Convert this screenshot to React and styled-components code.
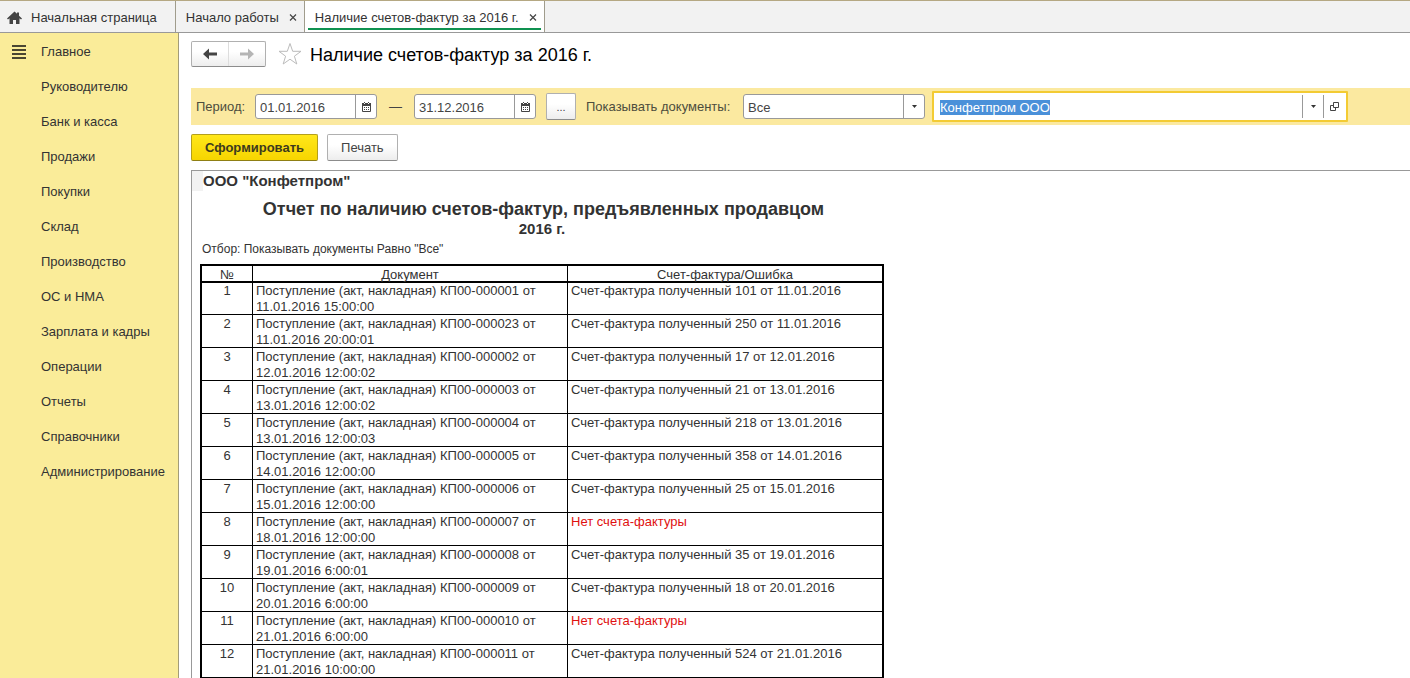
import React, { useEffect, useRef } from 'react';
import styled, { createGlobalStyle, css } from 'styled-components';

const GlobalStyle = createGlobalStyle`
  * {
    box-sizing: border-box;
  }

  body {
    margin: 0;
    background-color: #fff;
  }

  body, button, input, select {
    font-family: 'Liberation Sans', Arial, sans-serif;
    font-size: 13px;
    color: #444;
  }
`;

const Page = styled.div`
  height: 100vh;
  display: flex;
  flex-direction: column;
  overflow: hidden;
`;

const TabBar = styled.nav`
  height: 33px;
  flex-shrink: 0;
  display: flex;
  background-color: #f2f2f2;
  border-top: 1px solid #b5a883;
  border-bottom: 1px solid #999;
`;

const Tab = styled.div`
  position: relative;
  display: flex;
  align-items: center;
  gap: 8px;
  padding: 2px 5px 0 10px;
  border-right: 1px solid #a09c8c;
  background-color: ${({ $active }) => ($active ? '#fff' : 'transparent')};

  ${({ $active }) =>
    $active &&
    css`
      &::after {
        content: '';
        position: absolute;
        left: 3px;
        right: 3px;
        bottom: 2px;
        height: 2px;
        background-color: #0f9150;
      }
    `}
`;

const TabLink = styled.a`
  display: flex;
  align-items: center;
  gap: 8px;
  color: #333;
  text-decoration: none;
  white-space: nowrap;
`;

const HomeTab = styled(Tab)`
  padding: 2px 18px 0 6px;
`;

const IconButton = styled.button`
  display: flex;
  align-items: center;
  justify-content: center;
  padding: 0;
  border: 0;
  background: none;
`;

const Body = styled.div`
  flex: 1;
  min-height: 0;
  display: flex;
`;

const Sidebar = styled.aside`
  width: 179px;
  flex-shrink: 0;
  display: flex;
  align-items: flex-start;
  padding: 1px 0 0 12px;
  background-color: #faec99;
  border-right: 1px solid #a39c78;
`;

const MenuButton = styled(IconButton)`
  width: 14px;
  height: 35px;
`;

const Menu = styled.ul`
  margin: 0;
  padding: 0 0 0 15px;
  list-style: none;
`;

const MenuLink = styled.a`
  display: block;
  line-height: 35px;
  color: #333;
  text-decoration: none;
  white-space: nowrap;
`;

const Main = styled.main`
  flex: 1;
  min-width: 0;
  display: flex;
  flex-direction: column;
  padding: 8px 0 0 12px;
`;

const TitleRow = styled.header`
  display: flex;
  align-items: center;
  height: 26px;
`;

const raised = css`
  border: 1px solid #b0b0b0;
  border-bottom-color: #8c8c8c;
  border-radius: 2px;
  background: linear-gradient(#fff 40%, #ededed);
`;

const History = styled.div`
  ${raised}
  display: flex;
  width: 75px;
  height: 26px;
  margin-right: 12px;

  ${IconButton} {
    flex: 1;
  }

  ${IconButton} + ${IconButton} {
    border-left: 1px solid #ddd;
  }
`;

const Title = styled.h1`
  margin: 0 0 0 8px;
  padding-top: 2px;
  font-size: 18px;
  line-height: 24px;
  font-weight: 400;
  color: #000;
`;

const FilterBar = styled.form`
  height: 37px;
  flex-shrink: 0;
  display: flex;
  align-items: center;
  margin-top: 21px;
  padding-left: 5px;
  background-color: #fbe9a0;
`;

const Label = styled.label`
  width: ${({ $width }) => $width}px;
  flex-shrink: 0;
  white-space: nowrap;
  color: #4d4d3d;
`;

const Field = styled.div`
  width: ${({ $width }) => $width}px;
  height: 25px;
  display: flex;
  border: 1px solid #999;
  border-radius: 3px;
  background-color: #fff;
`;

const TextInput = styled.input`
  flex: 1;
  min-width: 0;
  padding: 2px 4px 0;
  border: 0;
  outline: 0;
  background: none;

  &::selection {
    color: #fff;
    background-color: #4a90d9;
  }
`;

const FieldButton = styled(IconButton)`
  width: 21px;
  border-left: 1px solid #999;
`;

const Dash = styled.span`
  width: 37px;
  text-align: center;
`;

const MoreButton = styled.button`
  ${raised}
  width: 30px;
  height: 27px;
  margin: 0 10px;
  padding: 0;
  font-size: 11px;
`;

const SelectField = styled.div`
  width: 182px;
  height: 25px;
  display: grid;
  grid-template-columns: 1fr 21px;
  border: 1px solid #999;
  border-radius: 3px;
  background-color: #fff;

  select {
    grid-area: 1 / 1 / 2 / 3;
    appearance: none;
    padding: 2px 4px 0;
    border: 0;
    outline: 0;
    background: none;
  }
`;

const SelectArrow = styled.span`
  grid-area: 1 / 2 / 2 / 3;
  display: flex;
  align-items: center;
  justify-content: center;
  border-left: 1px solid #999;
  pointer-events: none;
`;

const FocusField = styled(Field)`
  height: 31px;
  margin-left: 7px;
  padding: 2px 2px 2px 0;
  border: 2px solid #f3cb33;
  border-radius: 1px;

  ${TextInput} {
    padding: 2px 6px 0;
  }
`;

const Actions = styled.div`
  display: flex;
  gap: 9px;
  margin: 9px 0;
`;

const ActionButton = styled.button`
  ${raised}
  height: 27px;
  padding: 0 13px;

  ${({ $primary }) =>
    $primary &&
    css`
      border-color: #b39f1c;
      border-bottom-color: #8f7f14;
      background: linear-gradient(#ffe71a, #f7d500);
      font-weight: 700;
      color: #3d3a1e;
    `}
`;

const Report = styled.section`
  flex: 1;
  min-height: 0;
  overflow: hidden;
  border-top: 1px solid #999;
  border-left: 1px solid #999;
  color: #333;
`;

const Company = styled.div`
  display: flex;
  height: 20px;
  line-height: 20px;
  font-size: 15px;
  font-weight: 700;

  &::before {
    content: '';
    width: 11px;
    background-color: #f2f2f2;
  }
`;

const Sheet = styled.div`
  width: 684px;
  margin-left: 8px;
`;

const ReportTitle = styled.h2`
  margin: 0;
  padding: 6px 0 0 3px;
  font-size: 18px;
  line-height: 24px;
  text-align: center;
`;

const ReportYear = styled.p`
  margin: 0;
  font-size: 15px;
  line-height: 16px;
  font-weight: 700;
  text-align: center;
`;

const ReportFilter = styled.p`
  margin: 0;
  padding: 4px 2px 7px;
  font-size: 12px;
  line-height: 16px;
`;

const Table = styled.table`
  width: 100%;
  table-layout: fixed;
  border: 2px solid #000;
  border-spacing: 0;

  th {
    height: 15px;
    padding: 2px 0 0;
    line-height: 13px;
    font-weight: 400;
  }

  td {
    height: 33px;
    padding: 0 3px;
    line-height: 16px;
    vertical-align: top;
    border-top: 1px solid #000;
  }

  th + th,
  td + td {
    border-left: 1px solid #000;
  }

  tbody tr:first-child td {
    box-shadow: inset 0 1px #000;
  }

  td:first-child {
    text-align: center;
  }
`;

const CellText = styled.div`
  height: 32px;
  padding-top: 1px;
`;

const NumberCol = styled.col`
  width: 50px;
`;

const InvoiceCell = styled.td`
  color: ${({ $missing }) => ($missing ? '#e01010' : 'inherit')};
`;

const menu = [
  'Главное',
  'Руководителю',
  'Банк и касса',
  'Продажи',
  'Покупки',
  'Склад',
  'Производство',
  'ОС и НМА',
  'Зарплата и кадры',
  'Операции',
  'Отчеты',
  'Справочники',
  'Администрирование',
];

const rows = [
  { doc: '000001', date: '11.01.2016 15:00:00', invoice: '101 от 11.01.2016' },
  { doc: '000023', date: '11.01.2016 20:00:01', invoice: '250 от 11.01.2016' },
  { doc: '000002', date: '12.01.2016 12:00:02', invoice: '17 от 12.01.2016' },
  { doc: '000003', date: '13.01.2016 12:00:02', invoice: '21 от 13.01.2016' },
  { doc: '000004', date: '13.01.2016 12:00:03', invoice: '218 от 13.01.2016' },
  { doc: '000005', date: '14.01.2016 12:00:00', invoice: '358 от 14.01.2016' },
  { doc: '000006', date: '15.01.2016 12:00:00', invoice: '25 от 15.01.2016' },
  { doc: '000007', date: '18.01.2016 12:00:00' },
  { doc: '000008', date: '19.01.2016 6:00:01', invoice: '35 от 19.01.2016' },
  { doc: '000009', date: '20.01.2016 6:00:00', invoice: '18 от 20.01.2016' },
  { doc: '000010', date: '21.01.2016 6:00:00' },
  { doc: '000011', date: '21.01.2016 10:00:00', invoice: '524 от 21.01.2016' },
];

const HomeIcon = () => (
  <svg width='17' height='14' viewBox='0 0 17 14' fill='#444'>
    <path d='M8.5 0.5 L1 7.5 L2 8.5 L3.5 7.3 V13 H7 V9 H10 V13 H13.5 V7.3 L15 8.5 L16 7.5 L13 4.7 V1.5 H11 V2.8 Z' />
  </svg>
);

const CloseIcon = () => (
  <svg width='12' height='12' viewBox='0 0 12 12' stroke='#444' strokeWidth='1.2'>
    <path d='M3 2.5 L9 8.5 M9 2.5 L3 8.5' />
  </svg>
);

const MenuIcon = () => (
  <svg width='14' height='14' viewBox='0 0 14 14' fill='#4a4632'>
    <path d='M0 0h14v2H0z M0 4h14v2H0z M0 8h14v2H0z M0 12h14v2H0z' />
  </svg>
);

const ArrowIcon = ({ color, flip }) => (
  <svg width='14' height='12' viewBox='0 0 14 12' fill={color}>
    <path
      d={
        flip
          ? 'M14 6 L8 0.5 V4.6 H0 V7.4 H8 V11.5 Z'
          : 'M0 6 L6 0.5 V4.6 H14 V7.4 H6 V11.5 Z'
      }
    />
  </svg>
);

const StarIcon = () => (
  <svg width='24' height='24' viewBox='0 0 24 24' fill='none' stroke='#bbb'>
    <path d='M12 1.5 L14.7 9.3 H23 L16.4 14.2 L18.8 22 L12 17.2 L5.2 22 L7.6 14.2 L1 9.3 H9.3 Z' />
  </svg>
);

const CalendarIcon = () => (
  <svg width='9' height='10' viewBox='0 0 9 10'>
    <path d='M0 1h9v3H0z M2 0h1v1H2z M6 0h1v1H6z' fill='#444' />
    <path d='M2 1h1v1H2z M6 1h1v1H6z' fill='#fff' />
    <path d='M0.5 4 V9.5 H8.5 V4' fill='none' stroke='#444' />
    <path d='M2 5h1v1H2z M4 5h1v1H4z M6 5h1v1H6z M2 7h1v1H2z M4 7h1v1H4z M6 7h1v1H6z' fill='#444' />
  </svg>
);

const CaretIcon = () => (
  <svg width='5' height='3' viewBox='0 0 5 3' fill='#333'>
    <path d='M0 0 H5 L2.5 3 Z' />
  </svg>
);

const OpenIcon = () => (
  <svg width='9' height='9' viewBox='0 0 9 9' fill='none' stroke='#444'>
    <path d='M3.5 0.5 H8.5 V5.5 H3.5 Z M3 3.5 H0.5 V8.5 H5.5 V6' />
  </svg>
);

const App = () => {
  const orgRef = useRef(null);

  useEffect(() => {
    orgRef.current.focus();
    orgRef.current.select();
  }, []);

  return (
    <>
      <GlobalStyle />
      <Page>
        <TabBar>
          <HomeTab>
            <TabLink href='#home'>
              <HomeIcon />
              Начальная страница
            </TabLink>
          </HomeTab>
          <Tab>
            <TabLink href='#start'>Начало работы</TabLink>
            <IconButton aria-label='Закрыть'>
              <CloseIcon />
            </IconButton>
          </Tab>
          <Tab $active>
            <TabLink href='#report'>Наличие счетов-фактур за 2016 г.</TabLink>
            <IconButton aria-label='Закрыть'>
              <CloseIcon />
            </IconButton>
          </Tab>
        </TabBar>
        <Body>
          <Sidebar>
            <MenuButton aria-label='Меню'>
              <MenuIcon />
            </MenuButton>
            <Menu>
              {menu.map((item) => (
                <li key={item}>
                  <MenuLink href='#section'>{item}</MenuLink>
                </li>
              ))}
            </Menu>
          </Sidebar>
          <Main>
            <TitleRow>
              <History>
                <IconButton aria-label='Назад'>
                  <ArrowIcon color='#444' />
                </IconButton>
                <IconButton aria-label='Вперед'>
                  <ArrowIcon color='#b5b5b5' flip />
                </IconButton>
              </History>
              <IconButton aria-label='В избранное'>
                <StarIcon />
              </IconButton>
              <Title>Наличие счетов-фактур за 2016 г.</Title>
            </TitleRow>
            <FilterBar>
              <Label htmlFor='from' $width={59}>
                Период:
              </Label>
              <Field $width={122}>
                <TextInput id='from' defaultValue='01.01.2016' />
                <FieldButton type='button' aria-label='Календарь'>
                  <CalendarIcon />
                </FieldButton>
              </Field>
              <Dash>—</Dash>
              <Field $width={122}>
                <TextInput aria-label='Конец периода' defaultValue='31.12.2016' />
                <FieldButton type='button' aria-label='Календарь'>
                  <CalendarIcon />
                </FieldButton>
              </Field>
              <MoreButton type='button'>...</MoreButton>
              <Label htmlFor='kind' $width={157}>
                Показывать документы:
              </Label>
              <SelectField>
                <select id='kind'>
                  <option>Все</option>
                </select>
                <SelectArrow>
                  <CaretIcon />
                </SelectArrow>
              </SelectField>
              <FocusField $width={416}>
                <TextInput ref={orgRef} aria-label='Организация' defaultValue='Конфетпром ООО' />
                <FieldButton type='button' aria-label='Выбрать'>
                  <CaretIcon />
                </FieldButton>
                <FieldButton type='button' aria-label='Открыть'>
                  <OpenIcon />
                </FieldButton>
              </FocusField>
            </FilterBar>
            <Actions>
              <ActionButton $primary>Сформировать</ActionButton>
              <ActionButton>Печать</ActionButton>
            </Actions>
            <Report>
              <Company>ООО "Конфетпром"</Company>
              <Sheet>
                <ReportTitle>Отчет по наличию счетов-фактур, предъявленных продавцом</ReportTitle>
                <ReportYear>2016 г.</ReportYear>
                <ReportFilter>Отбор: Показывать документы Равно "Все"</ReportFilter>
                <Table>
                  <colgroup>
                    <NumberCol />
                    <col />
                    <col />
                  </colgroup>
                  <thead>
                    <tr>
                      <th>№</th>
                      <th>Документ</th>
                      <th>Счет-фактура/Ошибка</th>
                    </tr>
                  </thead>
                  <tbody>
                    {rows.map((row, index) => (
                      <tr key={row.doc}>
                        <td>
                          <CellText>{index + 1}</CellText>
                        </td>
                        <td>
                          <CellText>
                            Поступление (акт, накладная) КП00-{row.doc} от {row.date}
                          </CellText>
                        </td>
                        <InvoiceCell $missing={!row.invoice}>
                          <CellText>
                            {row.invoice ? `Счет-фактура полученный ${row.invoice}` : 'Нет счета-фактуры'}
                          </CellText>
                        </InvoiceCell>
                      </tr>
                    ))}
                  </tbody>
                </Table>
              </Sheet>
            </Report>
          </Main>
        </Body>
      </Page>
    </>
  );
};

export default App;
